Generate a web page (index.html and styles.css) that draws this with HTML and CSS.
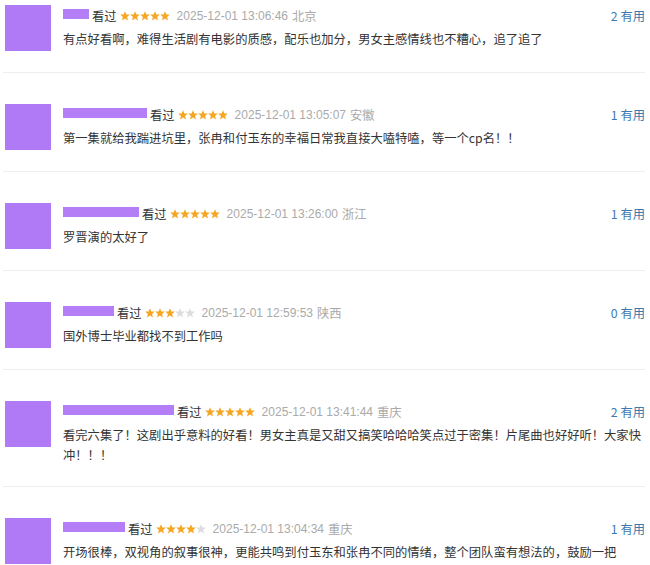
FILE: index.html
```html
<!DOCTYPE html>
<html lang="zh-CN">
<head>
  <meta charset="UTF-8">
  <title>短评</title>
  <meta name="viewport" content="width=device-width, initial-scale=1.0">
  <link rel="stylesheet" href="styles.css">
</head>
<body>
  <svg class="defs" width="0" height="0">
    <symbol id="star" viewBox="0 0 10 10">
      <polygon points="5,0.2 6.4,3.4 9.8,3.6 7.1,5.9 8,9.4 5,7.5 2,9.4 2.9,5.9 0.2,3.6 3.6,3.4"/>
    </symbol>
  </svg>

  <div class="list">
    <div class="item first">
      <div class="avatar"></div>
      <div class="body">
        <div class="meta">
          <span class="name w1"></span>
          <span class="watched">看过</span>
          <span class="stars">
            <svg class="on"><use href="#star"/></svg><svg class="on"><use href="#star"/></svg><svg class="on"><use href="#star"/></svg><svg class="on"><use href="#star"/></svg><svg class="on"><use href="#star"/></svg>
          </span>
          <span class="time">2025-12-01 13:06:46</span>
          <span class="loc">北京</span>
          <span class="votes">2 有用</span>
        </div>
        <p class="text">有点好看啊，难得生活剧有电影的质感，配乐也加分，男女主感情线也不糟心，追了追了</p>
      </div>
    </div>

    <div class="item">
      <div class="avatar"></div>
      <div class="body">
        <div class="meta">
          <span class="name w2"></span>
          <span class="watched">看过</span>
          <span class="stars">
            <svg class="on"><use href="#star"/></svg><svg class="on"><use href="#star"/></svg><svg class="on"><use href="#star"/></svg><svg class="on"><use href="#star"/></svg><svg class="on"><use href="#star"/></svg>
          </span>
          <span class="time">2025-12-01 13:05:07</span>
          <span class="loc">安徽</span>
          <span class="votes">1 有用</span>
        </div>
        <p class="text">第一集就给我踹进坑里，张冉和付玉东的幸福日常我直接大嗑特嗑，等一个cp名！！</p>
      </div>
    </div>

    <div class="item">
      <div class="avatar"></div>
      <div class="body">
        <div class="meta">
          <span class="name w3"></span>
          <span class="watched">看过</span>
          <span class="stars">
            <svg class="on"><use href="#star"/></svg><svg class="on"><use href="#star"/></svg><svg class="on"><use href="#star"/></svg><svg class="on"><use href="#star"/></svg><svg class="on"><use href="#star"/></svg>
          </span>
          <span class="time">2025-12-01 13:26:00</span>
          <span class="loc">浙江</span>
          <span class="votes">1 有用</span>
        </div>
        <p class="text">罗晋演的太好了</p>
      </div>
    </div>

    <div class="item">
      <div class="avatar"></div>
      <div class="body">
        <div class="meta">
          <span class="name w4"></span>
          <span class="watched">看过</span>
          <span class="stars">
            <svg class="on"><use href="#star"/></svg><svg class="on"><use href="#star"/></svg><svg class="on"><use href="#star"/></svg><svg><use href="#star"/></svg><svg><use href="#star"/></svg>
          </span>
          <span class="time">2025-12-01 12:59:53</span>
          <span class="loc">陕西</span>
          <span class="votes">0 有用</span>
        </div>
        <p class="text">国外博士毕业都找不到工作吗</p>
      </div>
    </div>

    <div class="item">
      <div class="avatar"></div>
      <div class="body">
        <div class="meta">
          <span class="name w5"></span>
          <span class="watched">看过</span>
          <span class="stars">
            <svg class="on"><use href="#star"/></svg><svg class="on"><use href="#star"/></svg><svg class="on"><use href="#star"/></svg><svg class="on"><use href="#star"/></svg><svg class="on"><use href="#star"/></svg>
          </span>
          <span class="time">2025-12-01 13:41:44</span>
          <span class="loc">重庆</span>
          <span class="votes">2 有用</span>
        </div>
        <p class="text">看完六集了！这剧出乎意料的好看！男女主真是又甜又搞笑哈哈哈笑点过于密集！片尾曲也好好听！大家快冲！！！</p>
      </div>
    </div>

    <div class="item">
      <div class="avatar"></div>
      <div class="body">
        <div class="meta">
          <span class="name w6"></span>
          <span class="watched">看过</span>
          <span class="stars">
            <svg class="on"><use href="#star"/></svg><svg class="on"><use href="#star"/></svg><svg class="on"><use href="#star"/></svg><svg class="on"><use href="#star"/></svg><svg><use href="#star"/></svg>
          </span>
          <span class="time">2025-12-01 13:04:34</span>
          <span class="loc">重庆</span>
          <span class="votes">1 有用</span>
        </div>
        <p class="text">开场很棒，双视角的叙事很神，更能共鸣到付玉东和张冉不同的情绪，整个团队蛮有想法的，鼓励一把</p>
      </div>
    </div>
  </div>
</body>
</html>
```

FILE: styles.css
```css
body {
  margin: 0;
  background: #ffffff;
  font-family: "Noto Sans CJK SC", "Noto Sans", sans-serif;
  font-size: 12.3px;
  color: #333333;
}

.defs {
  position: absolute;
}

.list {
  padding: 0 5px 0 3px;
}

.item {
  display: flex;
  align-items: flex-start;
  padding: 31px 0 21px;
  border-bottom: 1px solid #eeeeee;
}

.item.first {
  padding-top: 5px;
}

.avatar {
  flex: none;
  width: 46px;
  height: 46px;
  margin-left: 2px;
  background: #b07af6;
}

.body {
  flex: 1;
  margin-left: 12px;
}

.meta {
  display: flex;
  align-items: center;
  height: 20px;
  line-height: 20px;
  margin-top: 1px;
}

.name {
  display: inline-block;
  height: 10px;
  margin: 0 3px 4px 0;
  background: #b37ef6;
}

.w1 { width: 26px; }
.w2 { width: 84px; }
.w3 { width: 76px; }
.w4 { width: 51px; }
.w5 { width: 111px; }
.w6 { width: 62px; }

.watched {
  color: #333333;
}

.stars {
  display: flex;
  margin-left: 3px;
}

.stars svg {
  width: 10px;
  height: 10px;
  fill: #dddddd;
}

.stars svg.on {
  fill: #f5a623;
}

.time,
.loc {
  color: #aaaaaa;
}

.time {
  margin-left: 7px;
  font-family: "Liberation Sans", Arial, sans-serif;
  font-size: 12px;
}

.loc {
  margin-left: 4px;
}

.votes {
  margin-left: auto;
  color: #3d78ae;
}

.text {
  margin: 3px 0 0;
  line-height: 20px;
}
```
